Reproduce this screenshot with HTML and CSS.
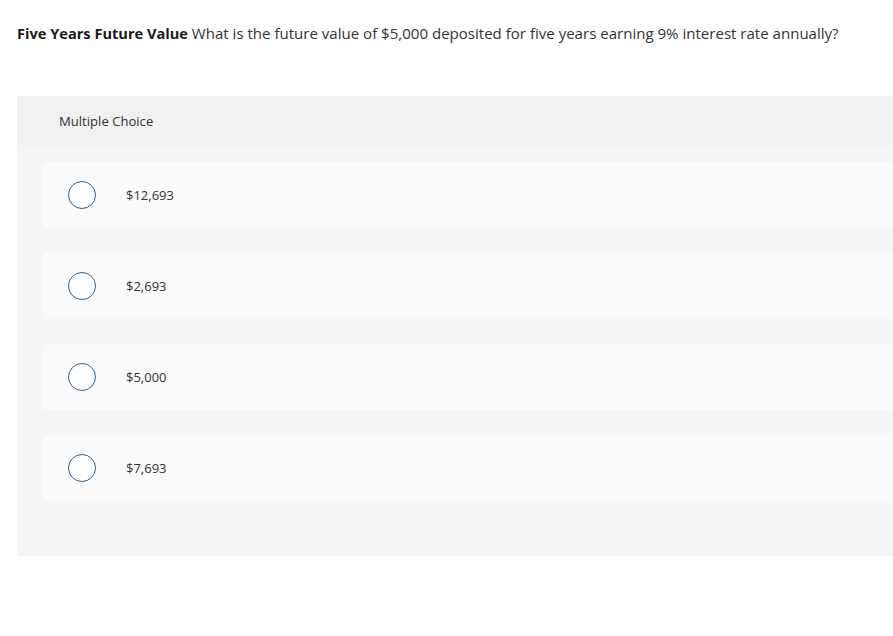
FILE: index.html
```html
<!DOCTYPE html>
<html>
<head>
<meta charset="utf-8">
<link rel="stylesheet" href="styles.css">
</head>
<body>
<div class="page">
  <p class="question"><strong>Five Years Future Value</strong> What is the future value of $5,000 deposited for five years earning 9% interest rate annually?</p>
  <div class="panel">
    <div class="panel-head">Multiple Choice</div>
    <div class="options">
      <div class="option"><span class="radio"></span><span class="label">$12,693</span></div>
      <div class="option"><span class="radio"></span><span class="label">$2,693</span></div>
      <div class="option"><span class="radio"></span><span class="label">$5,000</span></div>
      <div class="option"><span class="radio"></span><span class="label">$7,693</span></div>
    </div>
  </div>
</div>
</body>
</html>
```
FILE: styles.css
```css
html, body {
  margin: 0;
  padding: 0;
  background: #fff;
  overflow: hidden;
}
.page {
  width: 893px;
  height: 636px;
  overflow: hidden;
  font-family: "Open Sans", "Lato", sans-serif;
  color: #333;
}
.question {
  margin: 0;
  padding: 23px 0 0 17px;
  font-size: 15.05px;
  line-height: 20px;
  color: #333;
  white-space: nowrap;
}
.question strong {
  color: #1a1a1a;
  font-weight: 700;
  font-size: 14.6px;
}
.panel {
  margin: 53px 0 0 17px;
  width: 900px;
  background: #f5f5f5;
  border-radius: 3px 0 0 3px;
  padding-bottom: 55px;
}
.panel-head {
  height: 49px;
  display: flex;
  align-items: center;
  padding-left: 42px;
  background: #f0f0f0;
  font-size: 13.1px;
  color: #333;
  border-radius: 3px 0 0 0;
}
.options {
  padding: 17px 0 0 26px;
  display: flex;
  flex-direction: column;
  gap: 25px;
}
.option {
  height: 66px;
  display: flex;
  align-items: center;
  background: #fafafa;
  border-radius: 3px 0 0 3px;
  padding-left: 25px;
}
.radio {
  width: 26px;
  height: 26px;
  border: 1.5px solid #2d5f8f;
  border-radius: 50%;
  background: #fff;
  flex: none;
}
.label {
  margin-left: 30px;
  font-size: 13px;
  color: #333;
}
```
